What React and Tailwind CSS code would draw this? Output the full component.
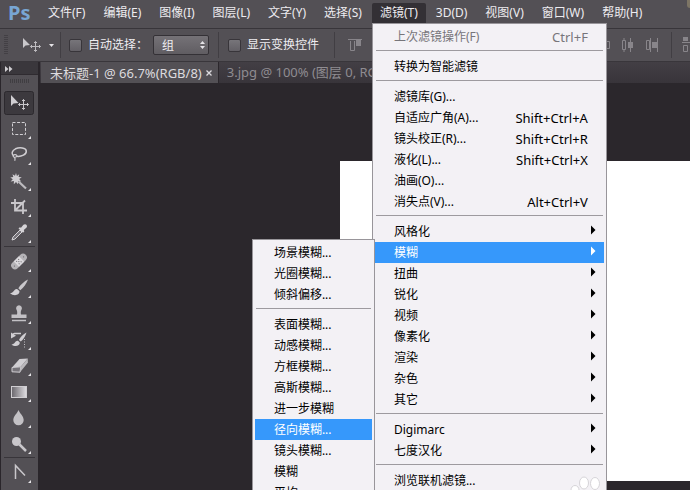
import React from "react";

const MENUS_BEFORE = ["文件(F)", "编辑(E)", "图像(I)", "图层(L)", "文字(Y)", "选择(S)"];
const MENUS_AFTER = ["3D(D)", "视图(V)", "窗口(W)", "帮助(H)"];

const FILTER_MENU = [
  { label: "上次滤镜操作(F)", keys: "Ctrl+F", disabled: true },
  null,
  { label: "转换为智能滤镜" },
  null,
  { label: "滤镜库(G)..." },
  { label: "自适应广角(A)...", keys: "Shift+Ctrl+A" },
  { label: "镜头校正(R)...", keys: "Shift+Ctrl+R" },
  { label: "液化(L)...", keys: "Shift+Ctrl+X" },
  { label: "油画(O)..." },
  { label: "消失点(V)...", keys: "Alt+Ctrl+V" },
  null,
  { label: "风格化", sub: true },
  { label: "模糊", sub: true, open: true },
  { label: "扭曲", sub: true },
  { label: "锐化", sub: true },
  { label: "视频", sub: true },
  { label: "像素化", sub: true },
  { label: "渲染", sub: true },
  { label: "杂色", sub: true },
  { label: "其它", sub: true },
  null,
  { label: "Digimarc", sub: true },
  { label: "七度汉化", sub: true },
  null,
  { label: "浏览联机滤镜..." },
];

const BLUR_MENU = [
  { label: "场景模糊..." },
  { label: "光圈模糊..." },
  { label: "倾斜偏移..." },
  null,
  { label: "表面模糊..." },
  { label: "动感模糊..." },
  { label: "方框模糊..." },
  { label: "高斯模糊..." },
  { label: "进一步模糊" },
  { label: "径向模糊...", open: true },
  { label: "镜头模糊..." },
  { label: "模糊" },
  { label: "平均" },
];

function Menu({ items, label, className }) {
  return (
    <ul
      role="menu"
      aria-label={label}
      className={"absolute border border-[#98959a] bg-[#f3f1f5] p-0.5 text-black " + className}
    >
      {items.map((item, i) =>
        item === null ? (
          <li key={i} role="separator" className="h-[9px] px-px pt-[3px]">
            <div className="h-px bg-[#9d9a9f]" />
          </li>
        ) : (
          <li key={i} role="none" className="relative">
            <button
              type="button"
              role="menuitem"
              disabled={item.disabled}
              className={
                "flex h-[21px] w-full items-center justify-between whitespace-nowrap pl-[19px] pr-4 pt-px text-left " +
                (item.open ? "bg-[#3698fb] text-white" : item.disabled ? "text-[#77757a]" : "")
              }
            >
              <span>{item.label}</span>
              {item.keys && <span className="text-[13px]">{item.keys}</span>}
              {item.sub && (
                <svg viewBox="0 0 5 10" className="-mr-2 mb-1 h-2.5 w-[5px]" fill="currentColor" aria-hidden="true">
                  <path d="M0 .5 4.500 5 0 9.500z" />
                </svg>
              )}
            </button>
            {item.sub && item.open && (
              <Menu items={BLUR_MENU} label={item.label} className="right-full top-[-3px] w-[123px]" />
            )}
          </li>
        )
      )}
    </ul>
  );
}

const CROSS = "M19.5 9.5v10M14.5 14.5h10M18 11l1.5-1.5L21 11M18 18l1.5 1.5L21 18M16 13l-1.5 1.5L16 16M23 13l1.5 1.5L23 16";

const TOOLS = [
  {
    name: "移动工具",
    active: true,
    art: (
      <>
        <path d="M7 5v11l2.500-2.500 5-.5z" fill="#d0ced2" />
        <path d={CROSS} fill="none" stroke="#c9c7cb" />
      </>
    ),
  },
  {
    name: "矩形选框工具",
    art: <rect x="8.500" y="6.500" width="13" height="12" fill="none" stroke="#d2d0d4" strokeDasharray="3 1.600" />,
  },
  {
    name: "套索工具",
    art: (
      <g fill="none" stroke="#d0ced2" strokeWidth="1.500">
        <path d="M9.500 14c-2.500-2-1.500-5.500 2-7.200C15.500 5 22 5.600 22.300 9c.3 3.500-5 5.800-9.300 5.300" />
        <path d="M13 13.800c-.5-1.800-3.800-1.500-3.800.3 0 1.600 3.400 1.500 3.800-.3M10.500 15.300c.8 1 .8 2 .2 3.400" strokeWidth="1.200" />
      </g>
    ),
  },
  {
    name: "魔棒工具",
    art: (
      <>
        <path d="m12 5 .9 3 2.300-1.800-.6 2.900 3.200.2-2.600 1.800 2 2.300-3-.4-.2 3.200-2-2.300-2.200 2.300.1-3.200-3.300.5 2.200-2.300L6.300 9.500l3-.5-.8-2.800 2.500 1.600z" fill="#d0ced2" />
        <path d="m14.500 13.500 7.500 7" stroke="#bdbbbf" strokeWidth="2.200" />
      </>
    ),
  },
  {
    name: "裁剪工具",
    art: <path d="M7 9h12v11M11 5v11.500h12M12 15.500 21 6.500" fill="none" stroke="#c9c7cb" strokeWidth="1.800" />,
  },
  {
    name: "吸管工具",
    art: (
      <>
        <path d="m8 20 1-3 7-7 2 2-7 7z" fill="#77747a" stroke="#d5d3d7" />
        <path d="m14.500 8.500 1.300-1.300 1.200.6 2.400-3c2.200-1.600 4.600.7 3.200 2.800l-2.800 2.500.5 1.300-1.300 1.300z" fill="#d5d3d7" />
      </>
    ),
  },
  {
    name: "污点修复画笔工具",
    divider: true,
    art: (
      <g transform="rotate(-45 15 12.500)">
        <rect x="5.500" y="8.700" width="19" height="7.600" rx="3.800" fill="#b5b3b7" />
        <rect x="11.300" y="8.700" width="7.400" height="7.600" fill="#dad8dc" />
        <path d="M13 10.800h.9M15.800 10.800h.9M13 14.200h.9M15.800 14.200h.9M14.400 12.500h.9M8 12.500h1M21 12.500h1" stroke="#57545a" />
      </g>
    ),
  },
  {
    name: "画笔工具",
    art: (
      <>
        <path d="M24 4.500c-3.700 1.800-7.400 5-9.700 8.800l2 1.900c3.400-2.700 6.100-6.500 7.700-10.700z" fill="#c9c7cb" />
        <path d="M13.400 14.200c-3.200-.8-3.300 3.700-7.400 4.100 3.500 3.200 10 2.300 9.400-2.200z" fill="#d3d1d5" />
      </>
    ),
  },
  {
    name: "仿制图章工具",
    art: (
      <>
        <path d="M15 4.300a3 3 0 0 1 2.500 4.500c-.8 1.300-.9 3.200-.5 4.700h5.500v3.500h-15v-3.500H13c.4-1.500.3-3.400-.5-4.700A3 3 0 0 1 15 4.300z" fill="#c3c1c5" />
        <path d="M8 19.500h14" stroke="#c3c1c5" strokeWidth="1.500" />
      </>
    ),
  },
  {
    name: "历史记录画笔工具",
    art: (
      <>
        <path d="M22.500 5.500c-3.500 1.800-6 4.600-7.600 7.400l1.900 1.700c2.700-2.400 4.800-5.500 5.700-9.100zM14 13.700c-2.800-.6-2.800 3.200-6.500 3.800 3 2.600 8.600 1.800 8.300-2z" fill="#d0ced2" />
        <path d="M17 6.500h-6.500c-1.500 0-1.800 1.500-3 2.800" fill="none" stroke="#d0ced2" strokeWidth="1.500" />
        <path d="m7 5.500 5 3.200-5 2.800z" fill="#d0ced2" />
        <path d="M20.500 12v9" stroke="#c3c1c5" strokeDasharray="1 1.500" />
      </>
    ),
  },
  {
    name: "橡皮擦工具",
    art: (
      <>
        <path d="m8 14.500 7.500-8.500 8.300-.5-7 8.300z" fill="#d0ced2" />
        <path d="M8 14.500v4.300l8 .4.800-5.400z" fill="#77747a" stroke="#d0ced2" />
        <path d="m16.800 13.800 7-8.300v4.200L16 19.200z" fill="#bab8bc" />
      </>
    ),
  },
  {
    name: "渐变工具",
    art: (
      <>
        <defs>
          <linearGradient id="ramp">
            <stop offset="0" stopColor="#68656b" />
            <stop offset="1" stopColor="#e0dee2" />
          </linearGradient>
        </defs>
        <rect x="7.500" y="7.500" width="15" height="11" fill="url(#ramp)" stroke="#d0ced2" />
      </>
    ),
  },
  {
    name: "模糊工具",
    art: <path d="M14.500 5c1.300 3.300 5.200 6.300 5.200 10a5.200 5.200 0 0 1-10.400 0c0-3.700 3.900-6.700 5.200-10z" fill="#c3c1c5" />,
  },
  {
    name: "减淡工具",
    art: (
      <>
        <circle cx="12.500" cy="10.500" r="4.500" fill="#c9c7cb" />
        <path d="m15.500 13.500 6.500 6.500" stroke="#c9c7cb" strokeWidth="2.500" />
      </>
    ),
  },
  {
    name: "钢笔工具",
    divider: true,
    art: <path d="M11.500 19V5.500L21 15.500" fill="none" stroke="#c9c7cb" strokeWidth="1.500" />,
  },
];

function Toolbox() {
  return (
    <aside aria-label="工具" className="w-10 shrink-0 overflow-hidden border-l border-r-2 border-[#2a262b] bg-[#535055]">
      <div className="h-[13px] border-b border-[#2f2b30] bg-[#3a373c] pl-1 pt-1">
        <svg viewBox="0 0 8 6" className="h-1.5 w-2" fill="#d0ced2" aria-hidden="true">
          <path d="m0 0 3.500 3L0 6zM4 0l3.500 3L4 6z" />
        </svg>
      </div>
      <div className="mb-2 flex h-[7px] items-center justify-center pt-1">
        <svg viewBox="0 0 20 4" className="h-1 w-5" aria-hidden="true">
          <path d="M0 1h20M0 3h20" stroke="#2f2c31" strokeDasharray="1 1" />
        </svg>
      </div>
      {TOOLS.map((tool) => (
        <div key={tool.name} className={tool.divider ? "mx-[3px] border-t border-[#38353a] pt-0.5" : "mx-[3px]"}>
          <button type="button" aria-label={tool.name} className="flex h-[26px] w-full items-center">
            <svg viewBox="0 0 30 26" className="h-[26px] w-[30px] shrink-0" aria-hidden="true">
              {tool.active && <rect x=".5" y="1.500" width="29" height="23" rx="2" fill="#3c393e" stroke="#2c292e" />}
              {tool.art}
              {!tool.active && <path d="M27 20v3h-3z" fill="#e6e4e8" />}
            </svg>
          </button>
        </div>
      ))}
    </aside>
  );
}

function Divider({ className }) {
  return <div className={"h-[26px] w-px shrink-0 bg-[#413e43] " + className} />;
}

function CheckOption({ children }) {
  return (
    <label className="flex shrink-0 items-center gap-1.5 whitespace-nowrap">
      <input
        type="checkbox"
        className="size-[13px] appearance-none rounded-[2px] border border-[#38353a] bg-linear-to-b from-[#77757a] to-[#636066]"
      />
      {children}
    </label>
  );
}

function AlignButton({ label, children }) {
  return (
    <button type="button" aria-label={label} className="shrink-0">
      <svg viewBox="0 0 14 14" className="size-3.5" fill="none" stroke="#88858a" aria-hidden="true">
        {children}
      </svg>
    </button>
  );
}

function OptionsBar() {
  return (
    <div className="flex h-[34px] shrink-0 items-center overflow-hidden border-b border-t border-b-[#39363b] border-t-[#38353a] bg-[#535055] text-[#eeecf0]">
      <svg viewBox="0 0 4 20" className="ml-1 h-5 w-1 shrink-0" aria-hidden="true">
        <path d="M1 0v20M3 0v20" stroke="#343136" strokeDasharray="1 1" />
      </svg>
      <button type="button" aria-label="移动工具预设" className="ml-2 flex shrink-0 items-center">
        <svg viewBox="0 0 40 26" className="h-[26px] w-10" aria-hidden="true">
          <path d="M7 6v10l2.500-2.500 4.500-.5z" fill="#c9c7cb" />
          <path d={CROSS} fill="none" stroke="#bdbbbf" />
          <path d="M33 12h5l-2.500 3z" fill="#e6e4e8" />
        </svg>
      </button>
      <Divider className="ml-1 mr-2" />
      <CheckOption>自动选择：</CheckOption>
      <div className="relative ml-[5px] shrink-0">
        <select
          aria-label="自动选择对象"
          className="block h-5 w-14 appearance-none rounded-[2px] border border-[#343136] bg-linear-to-b from-[#757277] to-[#605d62] pl-2 text-[12px]"
        >
          <option>组</option>
          <option>图层</option>
        </select>
        <svg viewBox="0 0 5 8" className="pointer-events-none absolute right-1 top-1.5 h-2 w-[5px]" fill="#e6e4e8" aria-hidden="true">
          <path d="M0 3 2.500 0 5 3zM0 5l2.500 3L5 5z" />
        </svg>
      </div>
      <Divider className="mx-[9px]" />
      <CheckOption>显示变换控件</CheckOption>
      <Divider className="ml-[15px] mr-[13px]" />
      <div className="flex shrink-0 items-center gap-2.5">
        <AlignButton label="顶对齐">
          <path d="M0 1.500h14M2.500 3v9.500h4V3" />
          <path d="M8 2h5v6H8z" fill="#88858a" stroke="none" />
        </AlignButton>
        <AlignButton label="垂直居中对齐">
          <path d="M0 7.500h14M2.500 2.500h4v10h-4z" />
        </AlignButton>
        <AlignButton label="底对齐">
          <path d="M0 12.500h14M2.500 2.500h4v10h-4z" />
        </AlignButton>
      </div>
      <div className="ml-auto flex shrink-0 items-center gap-2.5">
        <AlignButton label="左对齐">
          <path d="M1.500 0v14M3.500 3.500h9v7h-9z" />
        </AlignButton>
        <AlignButton label="水平居中对齐">
          <path d="M1.500 2.500h3v9h-3zM3 0v2M3 12v2M9.500 0v14" />
          <path d="M7 4h5v6H7z" fill="#88858a" stroke="none" />
        </AlignButton>
        <AlignButton label="右对齐">
          <path d="M1.500 2.500h3v9h-3zM5.500 0v14M12.500 0v14" />
          <path d="M7 4h5v6H7z" fill="#88858a" stroke="none" />
        </AlignButton>
        <Divider className="ml-0.5" />
        <button type="button" aria-label="分布" className="w-2 overflow-hidden">
          <svg viewBox="0 0 8 16" className="h-4 w-2" fill="none" stroke="#88858a" aria-hidden="true">
            <path d="M1 0h5v4H1z" fill="#88858a" stroke="none" />
            <path d="M0 5.500h8M1.500 8.500h4v6h-4z" />
          </svg>
        </button>
      </div>
    </div>
  );
}

function MenuBar() {
  const item = "h-5 whitespace-nowrap px-2";
  return (
    <header className="relative z-10 flex h-7 shrink-0 items-end overflow-visible bg-[#535055] pb-[5px] pl-2 text-[#eeecf0]">
      <span className="w-8 text-[20px] leading-5 font-bold text-[#78a6d3]">Ps</span>
      <nav aria-label="主菜单" className="flex gap-0.5">
        {MENUS_BEFORE.map((m) => (
          <button key={m} type="button" className={item}>
            {m}
          </button>
        ))}
        <div className="relative">
          <button type="button" aria-expanded="true" className={item + " rounded-t-[2px] bg-[#333035]"}>
            滤镜(T)
          </button>
          <Menu items={FILTER_MENU} label="滤镜" className="left-0 top-full w-[235px]" />
        </div>
        {MENUS_AFTER.map((m) => (
          <button key={m} type="button" className={item}>
            {m}
          </button>
        ))}
      </nav>
      <span className="ml-auto h-2 w-[3px] self-start rounded-bl-full bg-[#7d7565]" />
    </header>
  );
}

function Paw() {
  return (
    <svg viewBox="0 0 34 14" className="absolute bottom-0 right-[86px] z-20 h-3.5 w-[34px]" fill="#fff" stroke="#d6d4d8" aria-hidden="true">
      <ellipse cx="14" cy="7" rx="4.500" ry="6" />
      <ellipse cx="25" cy="7.500" rx="4.500" ry="6" />
      <ellipse cx="5" cy="14" rx="4" ry="4.500" />
    </svg>
  );
}

export default function App() {
  return (
    <div className="relative flex h-screen flex-col overflow-hidden bg-[#2b272c] font-['Noto_Sans','Noto_Sans_CJK_SC',sans-serif] text-[12px] leading-5">
      <MenuBar />
      <OptionsBar />
      <div className="flex min-h-0 flex-1">
        <Toolbox />
        <main className="flex min-w-0 flex-1 flex-col">
          <div role="tablist" className="flex h-[21px] shrink-0 bg-linear-to-b from-[#433f45] to-[#38343a] pl-px text-[13px]">
            <div role="tab" aria-selected="true" className="flex shrink-0 items-center gap-1 bg-[#535055] pl-[9px] pr-1.5 text-[#dddbdf]">
              <span className="whitespace-nowrap">未标题-1 @ 66.7%(RGB/8)</span>
              <button type="button" aria-label="关闭">
                <svg viewBox="0 0 6 6" className="size-1.5" stroke="#dddbdf" strokeWidth="1.300" aria-hidden="true">
                  <path d="m.5.5 5 5M5.500.5l-5 5" />
                </svg>
              </button>
            </div>
            <div role="tab" aria-selected="false" className="overflow-hidden whitespace-nowrap border-l border-[#2b272c] px-2 text-[#8f8c91]">
              3.jpg @ 100% (图层 0, RGB/8)
            </div>
          </div>
          <div className="flex min-h-0 flex-1 pb-[9px] pl-[300px] pt-[78px]">
            <div className="flex-1 bg-white" />
          </div>
        </main>
      </div>
      <Paw />
    </div>
  );
}
